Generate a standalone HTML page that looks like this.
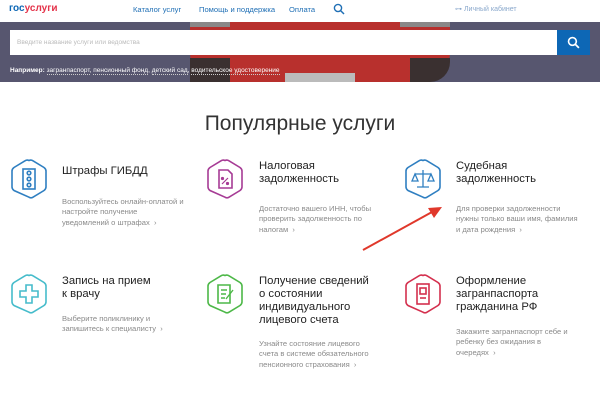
<!DOCTYPE html>
<html><head><meta charset="utf-8"><style>
*{margin:0;padding:0;box-sizing:border-box}
body{width:600px;height:400px;overflow:hidden;background:#fff;font-family:"Liberation Sans","Noto Sans CJK SC",sans-serif;position:relative}
.a{position:absolute;white-space:nowrap}
.nav{font-size:7.6px;color:#1f6fb5;top:5px}
.t{font-size:11.3px;color:#222;line-height:13px}
.d{font-size:7.6px;color:#8a8a8a;line-height:10.3px}
</style></head><body>
<div class="a" style="left:9px;top:3px;font-size:10px;font-weight:bold;color:#0d67b5">гос<span style="color:#e4334a">услуги</span></div>
<div class="a nav" style="left:133px">Каталог услуг</div>
<div class="a nav" style="left:199px">Помощь и поддержка</div>
<div class="a nav" style="left:289px">Оплата</div>
<svg class="a" style="left:333px;top:3px" width="12" height="12" viewBox="0 0 12 12"><circle cx="5" cy="5" r="3.6" fill="none" stroke="#1f6fb5" stroke-width="1.4"/><path d="M7.6 7.6L11 11" stroke="#1f6fb5" stroke-width="1.5"/></svg>
<div class="a" style="left:455px;top:5px;font-size:7px;color:#8aa8cc">⊶ Личный кабинет</div>
<div class="a" style="left:0;top:22px;width:600px;height:60px;background:#57566f"></div>
<div class="a" style="left:190px;top:22px;width:260px;height:60px;background:#b8302d;border-radius:0 0 30px 30px"></div>
<div class="a" style="left:190px;top:22px;width:40px;height:5px;background:#8a8888"></div>
<div class="a" style="left:400px;top:22px;width:50px;height:5px;background:#8a8888"></div>
<div class="a" style="left:190px;top:58px;width:40px;height:24px;background:#3a3030"></div>
<div class="a" style="left:410px;top:58px;width:40px;height:24px;background:#3a3030;border-radius:0 0 20px 0"></div>
<div class="a" style="left:285px;top:73px;width:70px;height:9px;background:#bbb"></div>
<div class="a" style="left:10px;top:30px;width:547px;height:25px;background:#fff"></div>
<div class="a" style="left:17px;top:39px;font-size:6.5px;color:#bbb">Введите название услуги или ведомства</div>
<div class="a" style="left:557px;top:30px;width:33px;height:25px;background:#0d67b5"></div>
<svg class="a" style="left:567px;top:36px" width="13" height="13" viewBox="0 0 12 12"><circle cx="5" cy="5" r="3.6" fill="none" stroke="#fff" stroke-width="1.5"/><path d="M7.6 7.6L11 11" stroke="#fff" stroke-width="1.6"/></svg>
<div class="a" style="left:10px;top:67px;font-size:6.5px;color:#fff"><b>Например:</b> <span style="border-bottom:1px dotted #ccc">загранпаспорт</span>, <span style="border-bottom:1px dotted #ccc">пенсионный фонд</span>, <span style="border-bottom:1px dotted #ccc">детский сад</span>, <span style="border-bottom:1px dotted #ccc">водительское удостоверение</span></div>
<div class="a" style="left:0;width:600px;text-align:center;top:112px;font-size:21px;color:#333;font-weight:300">Популярные услуги</div>

<svg class="a" style="left:0;top:0" width="600" height="400">
<defs><path id="hx" d="M18 1.5 Q20 0.5 22 1.8 L33 8.5 Q35 10 35 12 L35 28 Q35 30 33 31.5 L22 38.2 Q20 39.5 18 38.2 L3 31.5 Q1 30 1 28 L1 12 Q1 10 3 8.5 L14 1.8 Q16 0.5 18 1.5Z"/></defs>
<g transform="translate(11,159)" fill="none" stroke="#2f7fc1" stroke-width="1.6"><use href="#hx"/><rect x="12" y="10" width="12" height="20"/><circle cx="18" cy="14" r="1.8"/><circle cx="18" cy="20" r="1.8"/><circle cx="18" cy="26" r="1.8"/></g>
<g transform="translate(207,159)" fill="none" stroke="#a63b95" stroke-width="1.6"><use href="#hx"/><path d="M12 11h9l4 4v14H12z"/><path d="M15 25l6-6" stroke-width="1.2"/><circle cx="15.5" cy="19.5" r=".8"/><circle cx="20.5" cy="24.5" r=".8"/></g>
<g transform="translate(405,159)" fill="none" stroke="#2f7fc1" stroke-width="1.6"><use href="#hx"/><path d="M18 11v17M12 28h12M10 15h16M10 15l-3 7h6zM26 15l-3 7h6z" stroke-width="1.3"/></g>
<g transform="translate(11,274)" fill="none" stroke="#46bccb" stroke-width="1.6"><use href="#hx"/><path d="M15 11h6v6h6v6h-6v6h-6v-6H9v-6h6z"/></g>
<g transform="translate(207,274)" fill="none" stroke="#4db848" stroke-width="1.6"><use href="#hx"/><path d="M11 11h12v18H11z"/><path d="M14 16h6M14 20h5M14 24h4M19 25l7-9" stroke-width="1.4"/></g>
<g transform="translate(405,274)" fill="none" stroke="#d4304e" stroke-width="1.6"><use href="#hx"/><rect x="12" y="10" width="12" height="20"/><rect x="15" y="14" width="6" height="6"/><path d="M15 24h6"/></g>
<path d="M363 250L432 212" stroke="#e0382b" stroke-width="2"/><path d="M442 207L428 208L434 218Z" fill="#e0382b"/>
</svg>

<div class="a t" style="left:62px;top:165px">Штрафы ГИБДД</div>
<div class="a d" style="left:62px;top:197px">Воспользуйтесь онлайн-оплатой и<br>настройте получение<br>уведомлений о штрафах &nbsp;›</div>
<div class="a t" style="left:259px;top:160px">Налоговая<br>задолженность</div>
<div class="a d" style="left:259px;top:204px">Достаточно вашего ИНН, чтобы<br>проверить задолженность по<br>налогам &nbsp;›</div>
<div class="a t" style="left:456px;top:160px">Судебная<br>задолженность</div>
<div class="a d" style="left:456px;top:204px">Для проверки задолженности<br>нужны только ваши имя, фамилия<br>и дата рождения &nbsp;›</div>
<div class="a t" style="left:62px;top:275px">Запись на прием<br>к врачу</div>
<div class="a d" style="left:62px;top:314px">Выберите поликлинику и<br>запишитесь к специалисту &nbsp;›</div>
<div class="a t" style="left:259px;top:275px">Получение сведений<br>о состоянии<br>индивидуального<br>лицевого счета</div>
<div class="a d" style="left:259px;top:339px">Узнайте состояние лицевого<br>счета в системе обязательного<br>пенсионного страхования &nbsp;›</div>
<div class="a t" style="left:456px;top:275px">Оформление<br>загранпаспорта<br>гражданина РФ</div>
<div class="a d" style="left:456px;top:327px">Закажите загранпаспорт себе и<br>ребенку без ожидания в<br>очередях &nbsp;›</div>
</body></html>
